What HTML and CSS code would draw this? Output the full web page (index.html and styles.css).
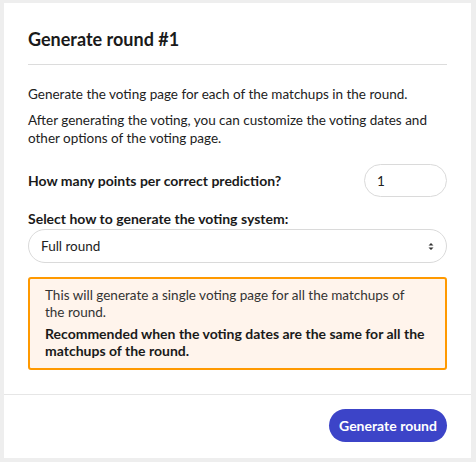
FILE: index.html
```html
<!DOCTYPE html>
<html>
<head>
<meta charset="utf-8">
<link rel="stylesheet" href="styles.css">
</head>
<body>
<div class="card">
  <div class="card-head">
    <h1 class="title">Generate round #1</h1>
  </div>
  <div class="card-body">
    <p class="text">Generate the voting page for each of the matchups in the round.</p>
    <p class="text">After generating the voting, you can customize the voting dates and other options of the voting page.</p>
    <div class="points-row">
      <label class="label">How many points per correct prediction?</label>
      <div class="input">1</div>
    </div>
    <div class="label select-label">Select how to generate the voting system:</div>
    <div class="select">
      <span>Full round</span>
      <svg class="arrows" width="6" height="9" viewBox="0 0 6 9"><path d="M0.5 3.5 L3 1 L5.5 3.5 Z M0.5 5.5 L3 8 L5.5 5.5 Z" fill="#333"/></svg>
    </div>
    <div class="warning">
      <p class="warn-text first">This will generate a single voting page for all the matchups of the round.</p>
      <p class="warn-text strong">Recommended when the voting dates are the same for all the matchups of the round.</p>
    </div>
  </div>
  <div class="card-foot">
    <button class="btn">Generate round</button>
  </div>
</div>
</body>
</html>
```
FILE: styles.css
```css
* { box-sizing: border-box; }
html, body { margin: 0; padding: 0; }
body {
  background: #eeeeee;
  font-family: Lato, "Noto Sans", sans-serif;
  color: #222;
  padding: 3px 5px 4px 4px;
  width: 476px;
  height: 462px;
}
.card {
  background: #fff;
  height: 455px;
  display: flex;
  flex-direction: column;
}
.card-head {
  margin: 0 24px;
  padding: 24px 0 13px;
  border-bottom: 1px solid #dcdcdc;
}
.title {
  margin: 0;
  font-size: 18px;
  line-height: 24px;
  font-weight: 700;
  color: #1a1a1a;
}
.card-body {
  padding: 20px 24px 0;
  flex: 1;
}
.text {
  margin: 0 0 8px;
  font-size: 13.5px;
  line-height: 18px;
  color: #222;
}
.points-row {
  display: flex;
  align-items: center;
  justify-content: space-between;
  margin-top: 17px;
}
.label {
  font-size: 14px;
  font-weight: 700;
  line-height: 18px;
  color: #1a1a1a;
}
.input {
  width: 83px;
  height: 33px;
  border: 1px solid #dadada;
  border-radius: 17px;
  padding: 0 12px;
  display: flex;
  align-items: center;
  font-size: 13.5px;
  color: #222;
}
.select-label {
  margin-top: 13px;
}
.select {
  margin-top: 1px;
  height: 34px;
  border: 1px solid #dadada;
  border-radius: 17px;
  padding: 0 12px 0 12px;
  display: flex;
  align-items: center;
  justify-content: space-between;
  font-size: 13.5px;
  color: #222;
}
.warning {
  margin-top: 14px;
  border: 2px solid #ff9900;
  border-radius: 3px;
  background: #fff4ec;
  padding: 8px 15px 9px;
}
.warn-text {
  margin: 0;
  font-size: 13.5px;
  line-height: 17px;
  color: #333;
}
.warn-text.first {
  max-width: 372px;
}
.warn-text.strong {
  margin-top: 4px;
  font-size: 14px;
  font-weight: 700;
  color: #1a1a1a;
}
.card-foot {
  border-top: 1px solid #e6e6e6;
  height: 64px;
  display: flex;
  align-items: center;
  justify-content: flex-end;
  padding: 0 24px 2px;
}
.btn {
  height: 33px;
  width: 118px;
  border: none;
  border-radius: 17px;
  background: #3c44c8;
  color: #fff;
  font-family: inherit;
  font-size: 14px;
  font-weight: 700;
  padding: 0;
}
```
